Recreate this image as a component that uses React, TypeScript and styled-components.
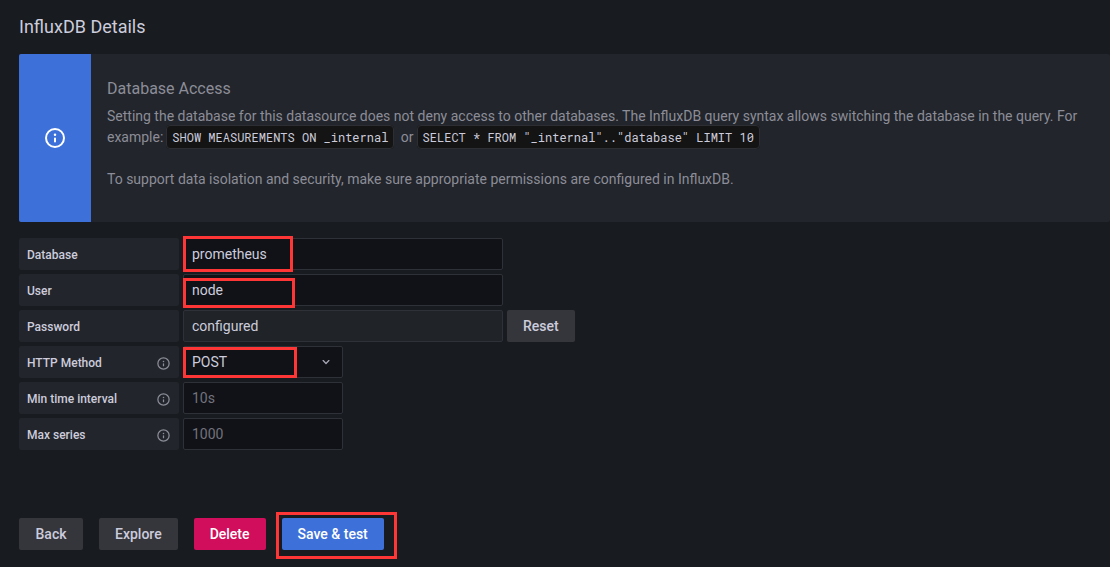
import React from "react";
import styled, { createGlobalStyle } from "styled-components";

const GlobalStyle = createGlobalStyle`
  *, *::before, *::after { box-sizing: border-box; }
  body {
    margin: 0;
    background: #181b1f;
    color: #ccccdc;
    font-family: Roboto, "Liberation Sans", sans-serif;
    font-size: 14px;
    line-height: 22px;
  }
`;

const Page = styled.main`
  padding: 16px 0 16px 19px;
`;

const Heading = styled.h3`
  margin: 0 0 16px;
  font-size: 18px;
  font-weight: 400;
  line-height: 22px;
`;

const Alert = styled.section`
  display: flex;
  margin-bottom: 16px;
  background: #22252b;
  border-radius: 2px;
`;

const AlertIcon = styled.div`
  display: flex;
  flex: none;
  align-items: center;
  justify-content: center;
  width: 72px;
  color: #ffffff;
  background: #3d71d9;
  border-radius: 2px 0 0 2px;
`;

const AlertBody = styled.div`
  flex: 1;
  min-width: 0;
  padding: 24px 8px 32px 16px;
  color: #8c8d98;
`;

const AlertTitle = styled.h4`
  margin: 0 0 7px;
  font-size: 16px;
  font-weight: 400;
  line-height: 21px;
`;

const AlertText = styled.p`
  margin: 0 0 21px;
  line-height: 21px;

  &:last-child {
    margin-bottom: 0;
  }
`;

const Code = styled.code`
  margin: 0 3px;
  padding: 3px 5px;
  color: #ccccdc;
  background: #141414;
  border: 1px solid #2c2e33;
  border-radius: 4px;
  font-family: "Roboto Mono", "DejaVu Sans Mono", monospace;
  font-size: 12px;
  white-space: nowrap;
`;

const Fields = styled.div`
  display: grid;
  gap: 4px;
`;

const Row = styled.div`
  display: flex;
  gap: 4px;
`;

const Label = styled.label`
  display: flex;
  flex: none;
  align-items: center;
  justify-content: space-between;
  width: 160px;
  height: 32px;
  padding: 2px 8px 0;
  background: #22252b;
  border-radius: 2px;
  font-size: 12px;
  font-weight: 500;

  svg {
    color: #8c8d98;
  }
`;

const Control = styled.div<{ $wide?: boolean }>`
  position: relative;
  width: ${(p) => (p.$wide ? 320 : 160)}px;

  > svg {
    position: absolute;
    top: 8px;
    right: 9px;
    color: #a6a7b4;
    pointer-events: none;
  }
`;

const controlStyle = `
  display: block;
  width: 100%;
  height: 32px;
  margin: 0;
  padding: 0 8px;
  color: #ccccdc;
  background: #111217;
  border: 1px solid #2e3137;
  border-radius: 2px;
  font: inherit;
`;

const Input = styled.input`
  ${controlStyle}

  &::placeholder {
    color: #72737d;
    opacity: 1;
  }

  &:disabled {
    background: #202327;
  }
`;

const Select = styled.select`
  ${controlStyle}
  appearance: none;
`;

const Actions = styled.div`
  display: flex;
  gap: 16px;
  margin-top: 68px;
`;

const variants = {
  secondary: { color: "#ccccdc", background: "#35363c" },
  danger: { color: "#ffffff", background: "#d10e5c" },
  primary: { color: "#ffffff", background: "#3d71d9" },
};

const Button = styled.button<{ $variant?: keyof typeof variants }>`
  min-width: 64px;
  height: 32px;
  padding: 0 16px;
  color: ${(p) => variants[p.$variant ?? "secondary"].color};
  background: ${(p) => variants[p.$variant ?? "secondary"].background};
  border: 0;
  border-radius: 2px;
  font: inherit;
  font-weight: 500;
  cursor: pointer;
`;

const Marked = styled.div`
  position: relative;
`;

const Highlight = styled.span<{ $top: number; $left: number; $width: number; $height: number }>`
  position: absolute;
  top: ${(p) => p.$top}px;
  left: ${(p) => p.$left}px;
  width: ${(p) => p.$width}px;
  height: ${(p) => p.$height}px;
  border: 3px solid #ff3636;
  pointer-events: none;
`;

const InfoIcon = ({ size }: { size: number }) => (
  <svg width={size} height={size} viewBox="0 0 24 24" fill="currentColor" aria-hidden="true">
    <path d="M12,2A10,10,0,1,0,22,12,10.01114,10.01114,0,0,0,12,2Zm0,18a8,8,0,1,1,8-8A8.00917,8.00917,0,0,1,12,20Zm0-8.5a1,1,0,0,0-1,1v3a1,1,0,0,0,2,0v-3A1,1,0,0,0,12,11.5Zm0-4a1.25,1.25,0,1,0,1.25,1.25A1.25,1.25,0,0,0,12,7.5Z" />
  </svg>
);

const ChevronIcon = () => (
  <svg width="16" height="16" viewBox="0 0 24 24" fill="currentColor" aria-hidden="true">
    <path d="M17,9.17a1,1,0,0,0-1.41,0L12,12.71,8.46,9.17a1,1,0,0,0-1.41,0,1,1,0,0,0,0,1.42l4.24,4.24a1,1,0,0,0,1.42,0L17,10.59A1,1,0,0,0,17,9.17Z" />
  </svg>
);

export default function App() {
  return (
    <>
      <GlobalStyle />
      <Page>
        <Heading>InfluxDB Details</Heading>
        <Alert>
          <AlertIcon>
            <InfoIcon size={24} />
          </AlertIcon>
          <AlertBody>
            <AlertTitle>Database Access</AlertTitle>
            <AlertText>
              Setting the database for this datasource does not deny access to other databases. The InfluxDB query
              syntax allows switching the database in the query. For example:
              <Code>SHOW MEASUREMENTS ON _internal</Code> or
              <Code>SELECT * FROM "_internal".."database" LIMIT 10</Code>
            </AlertText>
            <AlertText>
              To support data isolation and security, make sure appropriate permissions are configured in InfluxDB.
            </AlertText>
          </AlertBody>
        </Alert>

        <Fields>
          <Row>
            <Label htmlFor="database">Database</Label>
            <Control $wide>
              <Input id="database" defaultValue="prometheus" />
              <Highlight $top={-2} $left={0} $width={110} $height={36} />
            </Control>
          </Row>
          <Row>
            <Label htmlFor="user">User</Label>
            <Control $wide>
              <Input id="user" defaultValue="node" />
              <Highlight $top={4} $left={0} $width={112} $height={30} />
            </Control>
          </Row>
          <Row>
            <Label htmlFor="password">Password</Label>
            <Control $wide>
              <Input id="password" defaultValue="configured" disabled />
            </Control>
            <Button type="button">Reset</Button>
          </Row>
          <Row>
            <Label htmlFor="method">
              HTTP Method
              <InfoIcon size={15} />
            </Label>
            <Control>
              <Select id="method" defaultValue="POST">
                <option>GET</option>
                <option>POST</option>
              </Select>
              <ChevronIcon />
              <Highlight $top={1} $left={0} $width={114} $height={31} />
            </Control>
          </Row>
          <Row>
            <Label htmlFor="interval">
              Min time interval
              <InfoIcon size={15} />
            </Label>
            <Control>
              <Input id="interval" placeholder="10s" />
            </Control>
          </Row>
          <Row>
            <Label htmlFor="series">
              Max series
              <InfoIcon size={15} />
            </Label>
            <Control>
              <Input id="series" placeholder="1000" />
            </Control>
          </Row>
        </Fields>

        <Actions>
          <Button type="button">Back</Button>
          <Button type="button">Explore</Button>
          <Button type="button" $variant="danger">
            Delete
          </Button>
          <Marked>
            <Button type="submit" $variant="primary">
              Save &amp; test
            </Button>
            <Highlight $top={-6} $left={-6} $width={121} $height={47} />
          </Marked>
        </Actions>
      </Page>
    </>
  );
}
